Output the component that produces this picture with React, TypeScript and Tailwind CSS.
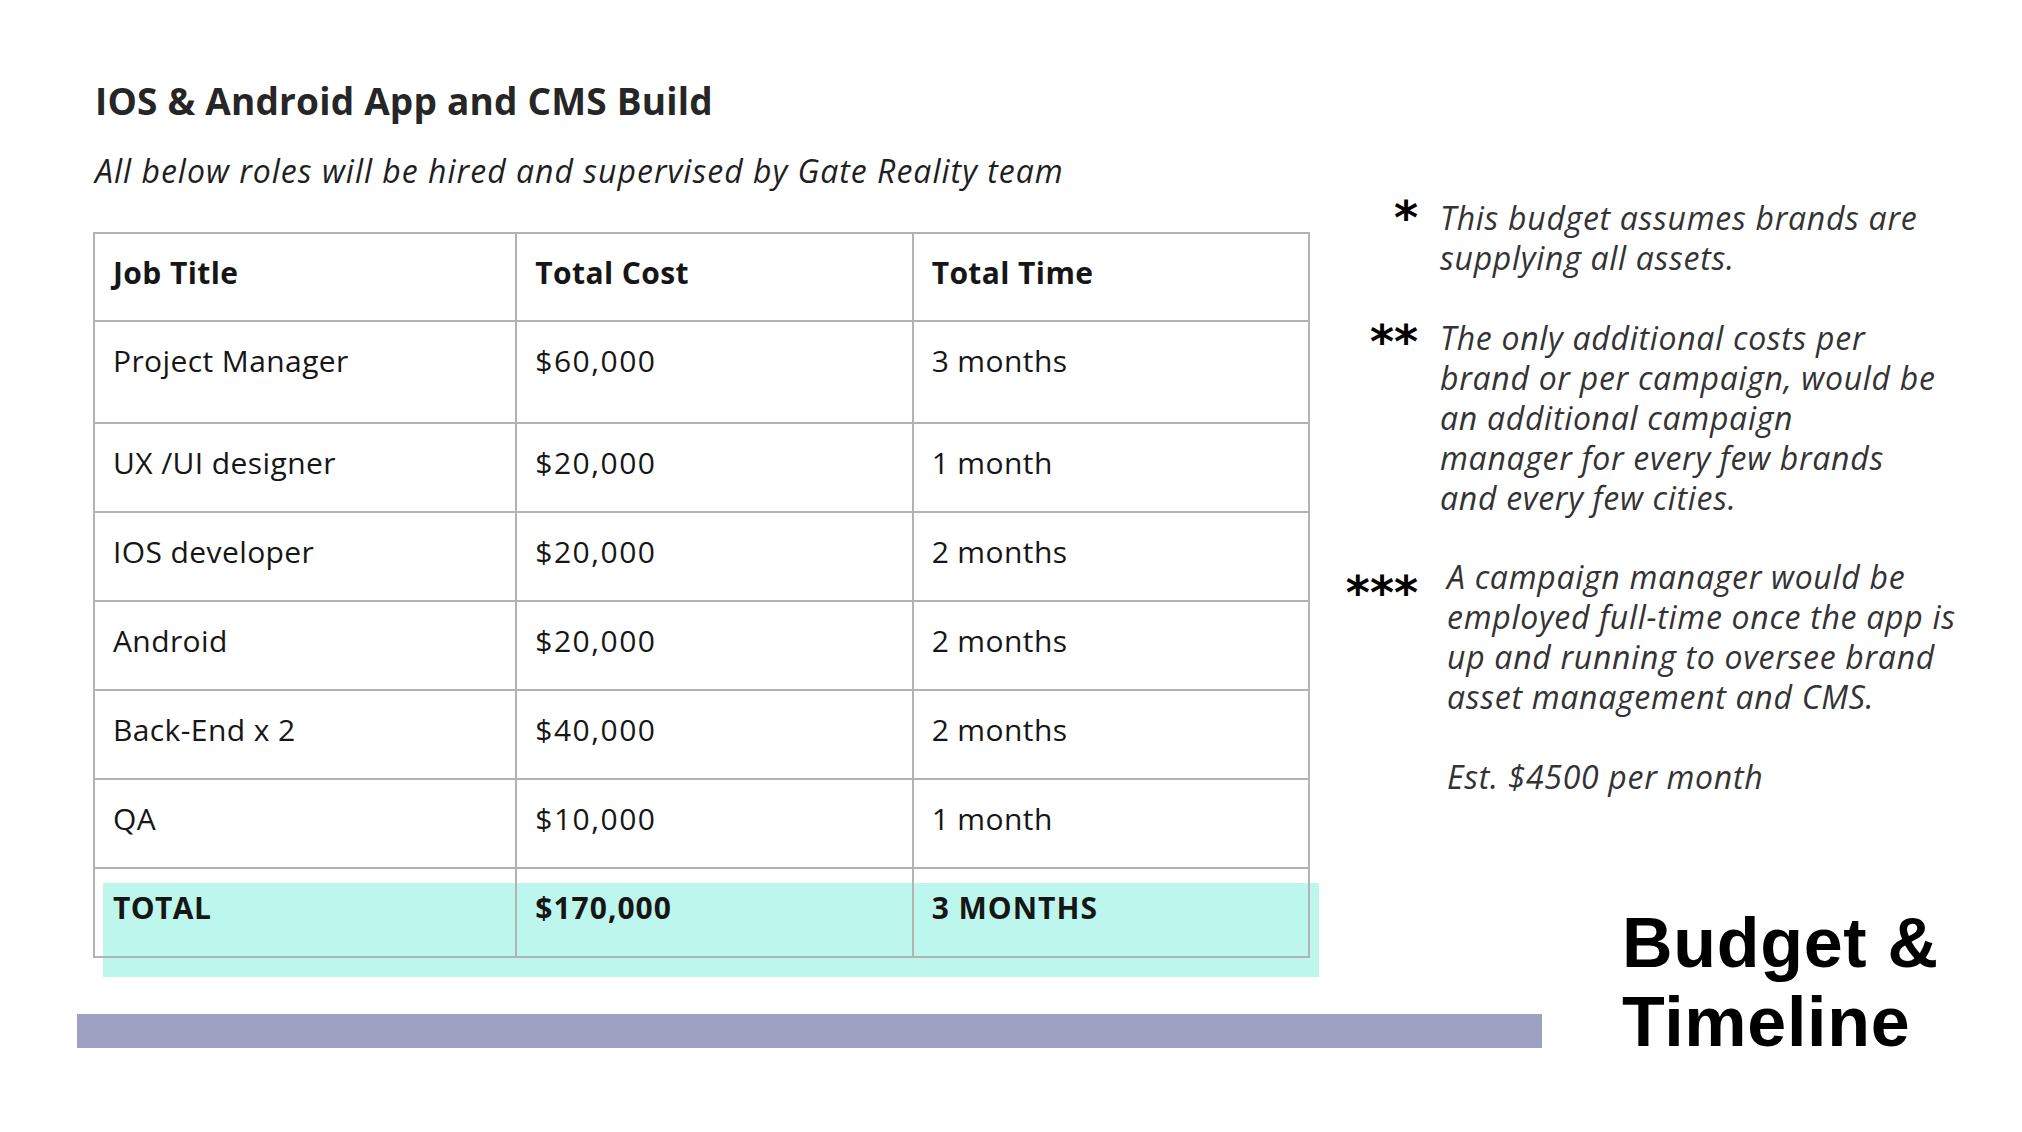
const rows = [
  { title: 'Project Manager', cost: '$60,000', time: '3 months', h: 'h-[102px]' },
  { title: 'UX /UI designer', cost: '$20,000', time: '1 month', h: 'h-[89px]' },
  { title: 'IOS developer', cost: '$20,000', time: '2 months', h: 'h-[89px]' },
  { title: 'Android', cost: '$20,000', time: '2 months', h: 'h-[89px]' },
  { title: 'Back-End x 2', cost: '$40,000', time: '2 months', h: 'h-[89px]' },
  { title: 'QA', cost: '$10,000', time: '1 month', h: 'h-[89px]' },
];

const cell = 'border-2 border-[#b3b3b3] align-top pl-[18px] pt-[21px] leading-[36px]';

function Note({ stars, starClass, textClass, lines }: { stars: string; starClass: string; textClass?: string; lines: string[] }) {
  return (
    <div className="grid grid-cols-[99px_1fr]">
      <div className={`text-right pr-[22px] font-['DejaVu_Sans',sans-serif] font-bold text-[46px] leading-[40px] text-black ${starClass}`}>
        {stars}
      </div>
      <div className={`italic text-[32px] leading-[40px] tracking-[0.7px] text-[#333333] ${textClass ?? ''}`}>
        {lines.map((l) => (
          <div key={l} className="whitespace-nowrap">{l}</div>
        ))}
      </div>
    </div>
  );
}

export default function App() {
  return (
    <div className="w-[2022px] h-[1132px] bg-white overflow-hidden flex font-['Open_Sans',sans-serif]">
      {/* left: heading, table, bar */}
      <div className="w-[1264px] ml-[77px] shrink-0 flex flex-col">
        <h1 className="pl-[18px] mt-[79px] text-[37px] leading-[44px] tracking-[0.2px] font-bold text-[#262626]">
          IOS &amp; Android App and CMS Build
        </h1>
        <p className="pl-[18px] mt-[28px] italic text-[32px] leading-[40px] tracking-[1px] text-[#1f1f1f]">
          All below roles will be hired and supervised by Gate Reality team
        </p>

        <div className="relative ml-[16px] mt-[41px] w-[1217px]">
          <div className="absolute left-[10px] -right-[9px] -bottom-[19px] h-[94px] bg-[#bdf6ec]" />
          <table className="relative w-full border-collapse text-[30px] tracking-[0.4px] text-[#161616]">
            <colgroup>
              <col className="w-[423px]" />
              <col className="w-[397px]" />
              <col className="w-[397px]" />
            </colgroup>
            <tbody>
              <tr className="h-[88px] font-bold">
                <td className={cell}>Job Title</td>
                <td className={cell}>Total Cost</td>
                <td className={cell}>Total Time</td>
              </tr>
              {rows.map((r) => (
                <tr key={r.title} className={r.h}>
                  <td className={cell}>{r.title}</td>
                  <td className={`${cell} tracking-[1.5px]`}>{r.cost}</td>
                  <td className={cell}>{r.time}</td>
                </tr>
              ))}
              <tr className="h-[89px] font-bold">
                <td className={cell}>TOTAL</td>
                <td className={`${cell} tracking-[1px]`}>$170,000</td>
                <td className={`${cell} tracking-[1px]`}>3 MONTHS</td>
              </tr>
            </tbody>
          </table>
        </div>

        <div className="mt-[56px] w-[1465px] h-[34px] shrink-0 bg-[#9fa1c2]" />
      </div>

      {/* right: notes and title */}
      <div className="flex-1 flex flex-col pt-[198px]">
        <Note
          stars="*"
          starClass="pt-[0px]"
          lines={['This budget assumes brands are', 'supplying all assets.']}
        />
        <div className="mt-[40px]">
          <Note
            stars="**"
            starClass="pt-[4px]"
            lines={[
              'The only additional costs per',
              'brand or per campaign, would be',
              'an additional campaign',
              'manager for every few brands',
              'and every few cities.',
            ]}
          />
        </div>
        <div className="mt-[39px]">
          <Note
            stars="***"
            starClass="pt-[16px]"
            textClass="pl-[7px]"
            lines={[
              'A campaign manager would be',
              'employed full-time once the app is',
              'up and running to oversee brand',
              'asset management and CMS.',
              '\u00a0',
              'Est. $4500 per month',
            ]}
          />
        </div>
        <div className="ml-[281px] mt-[107px] font-['Liberation_Sans',sans-serif] font-bold text-[70px] leading-[79px] tracking-[0.7px] text-black">
          <div>Budget &amp;</div>
          <div>Timeline</div>
        </div>
      </div>
    </div>
  );
}
